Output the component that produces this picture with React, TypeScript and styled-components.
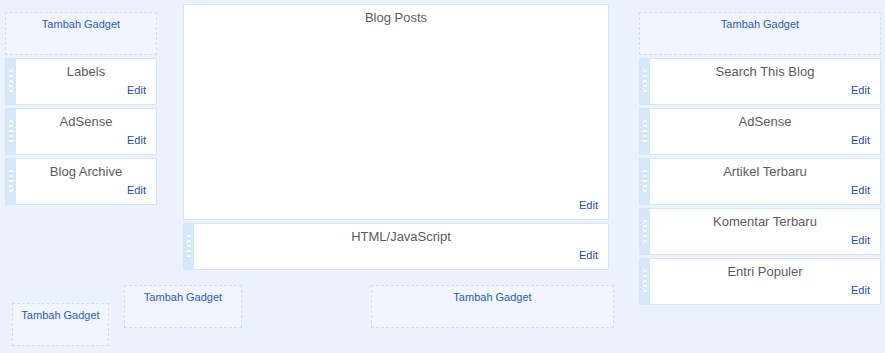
import React from "react";
import styled, { createGlobalStyle } from "styled-components";

const Global = createGlobalStyle`
  html, body { margin: 0; padding: 0; background: #ebf2fd; }
  body { font-family: "Liberation Sans", Arial, sans-serif; }
`;

const Page = styled.div`
  display: flex;
  align-items: flex-start;
  padding: 4px 0 0 5px;
  width: 885px;
  height: 353px;
  box-sizing: border-box;
  overflow: hidden;
`;

const Main = styled.div`
  display: flex;
  flex-direction: column;
  width: 604px;
  flex: none;
`;

const TopRow = styled.div`
  display: flex;
  align-items: flex-start;
  gap: 26px;
`;

const Column = styled.div<{ $w: number; $top?: number }>`
  display: flex;
  flex-direction: column;
  gap: 3px;
  flex: none;
  width: ${(p) => p.$w}px;
  margin-top: ${(p) => p.$top ?? 0}px;
`;

const RightColumn = styled(Column)`
  margin-left: 30px;
`;

const AddBox = styled.div<{ $w?: number; $top?: number; $left?: number }>`
  box-sizing: border-box;
  flex: none;
  height: 43px;
  width: ${(p) => (p.$w ? `${p.$w}px` : "auto")};
  margin-top: ${(p) => p.$top ?? 0}px;
  margin-left: ${(p) => p.$left ?? 0}px;
  border: 1px dashed #d3dcea;
  background: #f0f5fe;
  text-align: center;
  padding-top: 4px;
  font-size: 11px;
  line-height: 14px;
  color: #2c5cb3;
`;

const Widget = styled.div<{ $h?: number }>`
  box-sizing: border-box;
  display: flex;
  height: ${(p) => p.$h ?? 47}px;
  border: 1px solid #d6e4f5;
  background: #fff;
`;

const Handle = styled.div`
  width: 10px;
  flex: none;
  background: #d4e7fb;
  display: flex;
  align-items: center;
  justify-content: center;
`;

const Grip = styled.div`
  width: 4px;
  height: 23px;
  margin-right: 1px;
  background: repeating-linear-gradient(
    to bottom,
    #ffffff 0 2px,
    transparent 2px 5px
  );
`;

const Body = styled.div`
  flex: 1;
  display: flex;
  flex-direction: column;
  padding: 5px 10px 7px 0;
`;

const Title = styled.div`
  text-align: center;
  font-size: 13px;
  line-height: 16px;
  color: #5c5c5c;
  padding-left: 10px;
`;

const Edit = styled.div`
  margin-top: auto;
  text-align: right;
  font-size: 11px;
  line-height: 13px;
  color: #1f4d9e;
`;

const FooterRow = styled.div`
  display: flex;
  align-items: flex-start;
  margin-top: 15px;
`;

const Gadget = ({ title, grip = true, h }: { title: string; grip?: boolean; h?: number }) => (
  <Widget $h={h}>
    {grip && (
      <Handle>
        <Grip />
      </Handle>
    )}
    <Body>
      <Title>{title}</Title>
      <Edit>Edit</Edit>
    </Body>
  </Widget>
);

export default function App() {
  return (
    <>
      <Global />
      <Page>
        <Main>
          <TopRow>
            <Column $w={152} $top={8}>
              <AddBox>Tambah Gadget</AddBox>
              <Gadget title="Labels" />
              <Gadget title="AdSense" />
              <Gadget title="Blog Archive" />
            </Column>
            <Column $w={426}>
              <Gadget title="Blog Posts" grip={false} h={216} />
              <Gadget title="HTML/JavaScript" />
            </Column>
          </TopRow>
          <FooterRow>
            <AddBox $w={97} $left={7} $top={18}>Tambah Gadget</AddBox>
            <AddBox $w={118} $left={15}>Tambah Gadget</AddBox>
            <AddBox $w={243} $left={129}>Tambah Gadget</AddBox>
          </FooterRow>
        </Main>
        <RightColumn $w={242} $top={8}>
          <AddBox>Tambah Gadget</AddBox>
          <Gadget title="Search This Blog" />
          <Gadget title="AdSense" />
          <Gadget title="Artikel Terbaru" />
          <Gadget title="Komentar Terbaru" />
          <Gadget title="Entri Populer" />
        </RightColumn>
      </Page>
    </>
  );
}
